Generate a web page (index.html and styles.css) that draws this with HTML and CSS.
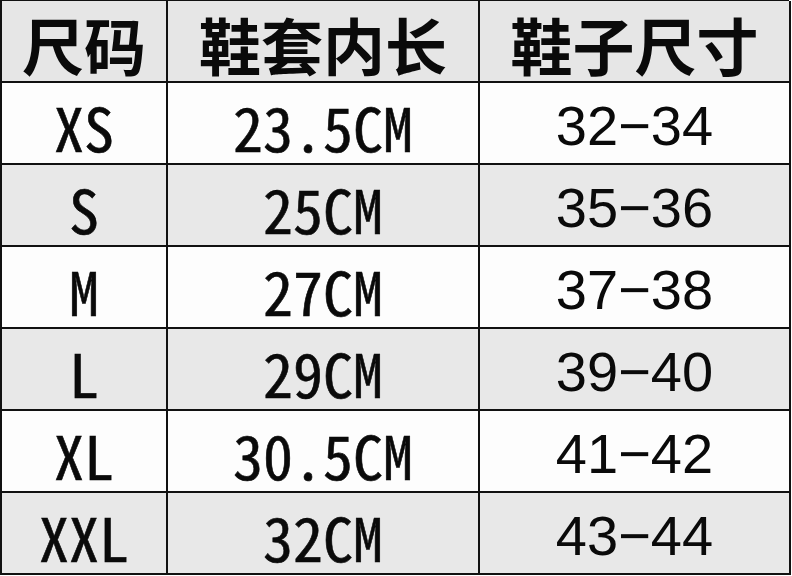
FILE: index.html
```html
<!DOCTYPE html>
<html lang="zh-CN">
<head>
<meta charset="utf-8">
<title>鞋套尺码表</title>
<link rel="stylesheet" href="styles.css">
</head>
<body>
<div class="table">
  <div class="cell head">尺码</div>
  <div class="cell head">鞋套内长</div>
  <div class="cell head">鞋子尺寸</div>

  <div class="cell mono">XS</div>
  <div class="cell mono">23.5CM</div>
  <div class="cell num">32−34</div>

  <div class="cell mono gray">S</div>
  <div class="cell mono gray">25CM</div>
  <div class="cell num gray">35−36</div>

  <div class="cell mono">M</div>
  <div class="cell mono">27CM</div>
  <div class="cell num">37−38</div>

  <div class="cell mono gray">L</div>
  <div class="cell mono gray">29CM</div>
  <div class="cell num gray">39−40</div>

  <div class="cell mono">XL</div>
  <div class="cell mono">30.5CM</div>
  <div class="cell num">41−42</div>

  <div class="cell mono gray">XXL</div>
  <div class="cell mono gray">32CM</div>
  <div class="cell num gray">43−44</div>
</div>
</body>
</html>
```

FILE: styles.css
```css
html, body {
  margin: 0;
  padding: 0;
  background: #ffffff;
  overflow: hidden;
}

.table {
  display: grid;
  grid-template-columns: 166px 312px 311px;
  grid-auto-rows: 82px;
  width: 789px;
  border-top: 1px solid #111;
  border-left: 2px solid #111;
  box-sizing: border-box;
}

.cell {
  display: flex;
  align-items: center;
  justify-content: center;
  border-right: 2px solid #111;
  border-bottom: 2px solid #111;
  background: #fdfdfd;
  color: #0a0a0a;
  padding-top: 6px;
  box-sizing: border-box;
  line-height: 1;
}

.gray {
  background: #e8e8e8;
}

.head {
  background: #e6e6e6;
  font-family: "Noto Sans CJK SC", sans-serif;
  font-weight: 700;
  font-size: 62px;
  padding-top: 6px;
}

.mono {
  font-family: "Noto Sans Mono CJK SC", "Noto Sans CJK SC", monospace;
  font-feature-settings: "hwid" 1;
  font-size: 60px;
  -webkit-text-stroke: 0.6px #0a0a0a;
}

.num {
  font-family: "Liberation Sans", Arial, sans-serif;
  font-size: 56px;
}
```
